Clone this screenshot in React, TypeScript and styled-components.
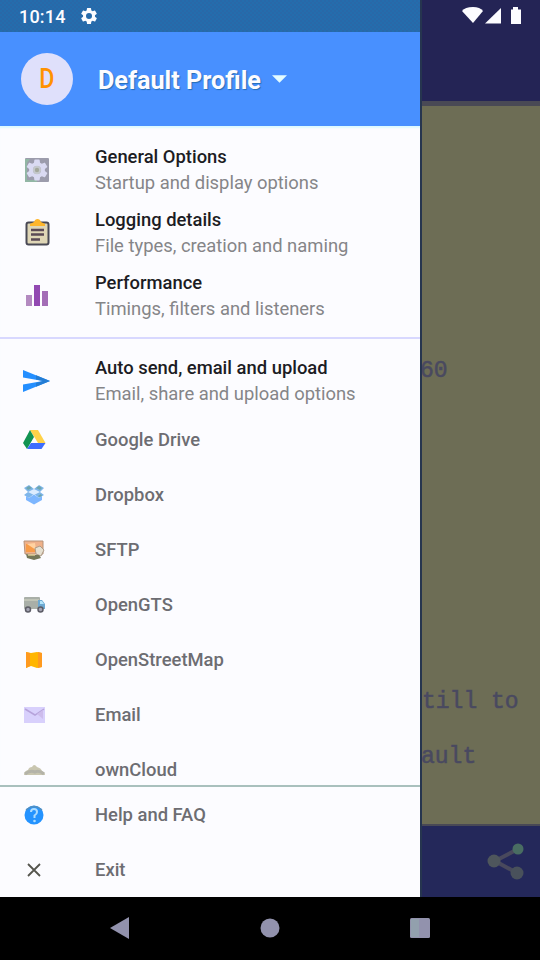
import React from "react";
import styled, { createGlobalStyle } from "styled-components";

const GlobalStyle = createGlobalStyle`
  * { box-sizing: border-box; }
  body { margin: 0; background: #000; font-family: Roboto, sans-serif; }
`;

const Screen = styled.div`
  width: 540px;
  height: 960px;
  display: flex;
  flex-direction: column;
  overflow: hidden;
  background: #000;
`;

const Stage = styled.div`
  height: 897px;
  display: grid;
  grid-template-columns: 420px 120px;
`;

const Drawer = styled.aside`
  height: 897px;
  display: flex;
  flex-direction: column;
  overflow: hidden;
  background: #fcfcff;
`;

const StatusBar = styled.div`
  height: 32px;
  flex: none;
  display: flex;
  align-items: center;
  gap: 13px;
  padding-left: 19px;
  background: repeating-conic-gradient(#246dad 0% 25%, #2968a8 0% 50%) 0 0 / 4px 4px;
  color: #fcfcff;
`;

const Clock = styled.span`
  width: 47px;
  font-size: 18px;
  font-weight: 500;
  letter-spacing: 0.2px;
  white-space: nowrap;
`;

const Header = styled.header`
  height: 94px;
  flex: none;
  display: flex;
  align-items: center;
  padding: 0 0 0 21px;
  background: #4890ff;
`;

const Avatar = styled.div`
  width: 52px;
  height: 52px;
  margin-right: 25px;
  border-radius: 50%;
  display: flex;
  align-items: center;
  justify-content: center;
  background: #dfe0fb;
`;

const Initial = styled.span`
  color: #ff9200;
  font-size: 27px;
  font-weight: 500;
  transform: scaleX(0.86);
`;

const ProfileName = styled.h1`
  margin: 2px 10px 0 0;
  width: 164px;
  color: #fcfcff;
  font-size: 25.2px;
  font-weight: 700;
  white-space: nowrap;
  text-shadow: 1px 1px 1px #246db6;
`;

const List = styled.nav`
  height: 659px;
  flex: none;
  padding-top: 12px;
  overflow: hidden;
  box-shadow: inset 0 3px 2px -1px #dcfaff;
`;

const Footer = styled.nav`
  flex: 1;
  border-top: 2px solid #a9c0bd;
`;

const Divider = styled.hr`
  height: 2px;
  margin: 10px 0 10px;
  border: 0;
  background: #d8d8ff;
`;

const Row = styled.div<{ $tall?: boolean }>`
  height: ${(p) => (p.$tall ? 63 : 55)}px;
  display: grid;
  grid-template-columns: 95px 1fr;
  align-items: center;
`;

const IconSlot = styled.span<{ $large?: boolean }>`
  display: flex;
  justify-content: center;
  width: 28px;
  margin-left: ${(p) => (p.$large ? 23 : 20)}px;
`;

const Lines = styled.div`
  display: flex;
  flex-direction: column;
  line-height: 26px;
  font-size: 18.4px;
  white-space: nowrap;
`;

const Title = styled.span`
  color: #1c1c24;
  font-weight: 500;
`;

const Subtitle = styled.span`
  color: #858588;
  font-weight: 400;
`;

const Label = styled.span`
  color: #6d6d72;
  font-size: 18.4px;
  font-weight: 500;
  white-space: nowrap;
`;

const LogPane = styled.main`
  height: 897px;
  display: flex;
  flex-direction: column;
  overflow: hidden;
  background: #242455;
  border-left: 2px solid #26354f;
`;

const TopBar = styled.div`
  height: 101px;
  flex: none;
  display: flex;
  align-items: flex-start;
  justify-content: flex-end;
  padding: 6px 16px 0 0;
`;

const Paper = styled.div`
  height: 725px;
  flex: none;
  display: flex;
  flex-direction: column;
  border-top: 5px solid #494955;
  border-bottom: 2px solid #494955;
  background: #6d6d55;
  color: #494960;
  font-family: "Liberation Mono", monospace;
  font-size: 23px;
  line-height: 30px;
  white-space: pre;
  -webkit-text-stroke: 0.5px #494960;
`;

const LogLine = styled.div<{ $gap: number; $shift?: number }>`
  margin-top: ${(p) => p.$gap}px;
  margin-left: ${(p) => p.$shift ?? 0}px;
`;

const BottomBar = styled.div`
  flex: 1;
  display: flex;
  align-items: center;
  justify-content: flex-end;
  padding: 0 16px 2px 0;
  background: #24285a;
`;

const NavBar = styled.footer`
  height: 63px;
  display: grid;
  grid-template-columns: 150px 150px 150px;
  justify-content: center;
  align-items: center;
  justify-items: center;
  padding: 0 1px 1px 0;
  background: #000;
`;

const gearPath =
  "M19.14 12.94c.04-.3.06-.61.06-.94 0-.32-.02-.64-.07-.94l2.03-1.58a.49.49 0 0 0 .12-.61l-1.92-3.32a.49.49 0 0 0-.59-.22l-2.39.96a7 7 0 0 0-1.62-.94l-.36-2.54A.48.48 0 0 0 13.92 2.4h-3.84a.48.48 0 0 0-.47.41l-.36 2.54c-.59.24-1.13.57-1.62.94l-2.39-.96a.49.49 0 0 0-.59.22L2.74 8.87a.48.48 0 0 0 .12.61l2.03 1.58a7 7 0 0 0 0 1.88l-2.03 1.58a.49.49 0 0 0-.12.61l1.92 3.32c.12.22.37.29.59.22l2.39-.96c.5.38 1.03.7 1.62.94l.36 2.54c.05.24.24.41.48.41h3.84c.24 0 .44-.17.47-.41l.36-2.54a7 7 0 0 0 1.62-.94l2.39.96c.22.08.47 0 .59-.22l1.92-3.32a.48.48 0 0 0-.12-.61zM12 15.6a3.6 3.6 0 1 1 0-7.2 3.6 3.6 0 0 1 0 7.2z";

const StatusGear = () => (
  <svg width="20" height="20" viewBox="0 0 24 24"><path fill="#fcfcff" d={gearPath} /></svg>
);

const SignalIcons = () => (
  <svg width="62" height="20" viewBox="0 0 62 20" fill="#fcfcff">
    <path d="M0 5Q3 1 11 1Q18 1 21 5L11 17Z" />
    <path d="M23 17.500L39 2V17.500Z" />
    <path d="M49 3.500H51V1H56V3.500H59V18H49Z" />
  </svg>
);

const GeneralIcon = () => (
  <svg width="24" height="24" viewBox="0 0 24 24">
    <rect width="24" height="24" rx="1" fill="#9c9cac" />
    <path d="M0 1H5L2 5V22H12V24H0Z" fill="#92b6a5" />
    <path fill="#dadaf2" transform="translate(-1.200 -1.200) scale(1.1)" d={gearPath} />
    <circle cx="12" cy="12" r="4.200" fill="#c4c8cc" />
    <circle cx="12" cy="12" r="2.200" fill="#a4a89c" />
  </svg>
);

const ClipboardIcon = () => (
  <svg width="25" height="27" viewBox="0 0 25 27">
    <rect x="1.500" y="3.500" width="22" height="22" rx="2" fill="#dfd6b6" stroke="#494955" strokeWidth="2" />
    <path d="M5 7V5L9 3Q10 0 12.500 0Q15 0 16 3L20 5V7Z" fill="#ffb62b" />
    <path d="M6 11H19M6 15.500H19M6 20.500H15" stroke="#5b4955" strokeWidth="2.300" />
  </svg>
);

const ChartIcon = () => (
  <svg width="22" height="23" viewBox="0 0 22 23">
    <rect x="0" y="11" width="6" height="11" fill="#b38ac0" />
    <rect x="8" y="1" width="6" height="21" fill="#9249b2" />
    <rect x="16" y="7" width="6" height="15" fill="#a36db6" />
  </svg>
);

const SendIcon = () => (
  <svg width="28" height="24" viewBox="0 0 28 24">
    <path d="M0 1L27 12L0 23V15.500L20 12L0 8.500Z" fill="#248fff" />
    <path d="M13 6.300L27 12L13 17.700V14L20 12L13 10.500Z" fill="#247dd4" />
  </svg>
);

const DriveIcon = () => (
  <svg width="23" height="20" viewBox="0 0 23 20">
    <path d="M7 0H15L22.500 13H15Z" fill="#ffd249" />
    <path d="M7 0L11 7L4 19L0 13Z" fill="#129352" />
    <path d="M8 13H22.500L18.500 19H4Z" fill="#3d6dff" />
  </svg>
);

const DropboxIcon = () => (
  <svg width="22" height="20" viewBox="0 0 22 20">
    <path d="M1 3L6 0L11 4L16 0L21 3L17 7L21 10L16 13L11 9L6 13L1 10L5 7Z" fill="#7fb6ea" />
    <path d="M5 7L11 4L17 7L11 10Z" fill="#dcecff" />
    <path d="M3 11L6 13L11 9.500L16 13L19 11V15L11 19.500L3 15Z" fill="#7db6ff" />
    <path d="M3 3L6 1L9 3L5 5ZM13 3L16 1L19 3L17 5ZM15 11L18 9L19 11L16 12Z" fill="#6da5ad" />
  </svg>
);

const SftpIcon = () => (
  <svg width="22" height="20" viewBox="0 0 22 20">
    <path d="M1 1H20V14H2Z" fill="#efb18a" stroke="#b69279" />
    <rect x="3" y="4" width="9" height="8" fill="#f79b48" />
    <path d="M4 4L13 10L12 3Z" fill="#ffd2a0" />
    <path d="M12 8L17 6L21 10L18 16L13 14Z" fill="#e5dfd0" stroke="#ad9b88" />
    <path d="M3 14L8 15H16L18 18L11 20L4 18Z" fill="#747758" />
    <path d="M5 15H12" stroke="#dbc98f" strokeWidth="1.500" />
  </svg>
);

const TruckIcon = () => (
  <svg width="23" height="16" viewBox="0 0 23 16">
    <rect x="1" y="0" width="16" height="12" rx="1" fill="#a9afa8" />
    <path d="M1 3H16" stroke="#c9cbbd" strokeWidth="1.500" />
    <path d="M15 3H19L22 7V12H15Z" fill="#6da9d2" />
    <path d="M17 4H19L21 7H17Z" fill="#b5e6fb" />
    <circle cx="5" cy="12.500" r="2.500" fill="#a5a5b4" stroke="#5c5c66" strokeWidth="1.500" />
    <circle cx="17.500" cy="12.500" r="2.500" fill="#a5a5b4" stroke="#5c5c66" strokeWidth="1.500" />
  </svg>
);

const MapIcon = () => (
  <svg width="18" height="18" viewBox="0 0 18 18">
    <path d="M1 1L6 2L12 1L17 2V16L12 17L6 15L1 17Z" fill="#ffb600" />
    <path d="M1 1L5 2V15L1 17ZM13 1L17 2V16L13 17Z" fill="#ff9a1f" />
  </svg>
);

const MailIcon = () => (
  <svg width="21" height="16" viewBox="0 0 21 16">
    <rect width="21" height="16" fill="#d8d0fc" />
    <path d="M1 2L11 8L20 2" fill="none" stroke="#b6a3db" strokeWidth="1.500" />
    <path d="M13 7L19 3V12Z" fill="#cdbcec" />
  </svg>
);

const CloudIcon = () => (
  <svg width="21" height="12" viewBox="0 0 21 12">
    <path d="M0 11Q0 7 4 6Q5 3 8 3Q10-1 13 3Q17 4 18 7Q21 8 21 11Z" fill="#c9c6b0" />
    <path d="M1 10Q6 6 11 8Q15 6 20 10" stroke="#b4b3a8" strokeWidth="3" fill="none" />
  </svg>
);

const HelpIcon = () => (
  <svg width="20" height="20" viewBox="0 0 20 20">
    <circle cx="10" cy="10" r="9.500" fill="#2493ff" />
    <path d="M2 5Q10-2 18 5" fill="none" stroke="#578fba" strokeWidth="1.500" />
    <path d="M7 7Q7 4 10 4Q13 4 13 7Q13 9 10.500 10.500V13" fill="none" stroke="#acdcff" strokeWidth="2" />
    <circle cx="10.500" cy="16" r="1.300" fill="#acdcff" />
  </svg>
);

const CloseIcon = () => (
  <svg width="14" height="14" viewBox="0 0 14 14"><path d="M1 1L13 13M13 1L1 13" stroke="#55554d" strokeWidth="1.800" /></svg>
);

const ShareIcon = () => (
  <svg width="38" height="40" viewBox="0 0 38 40">
    <path d="M32 8L9 20L31 32" fill="none" stroke="#49495d" strokeWidth="4" />
    <circle cx="8" cy="20" r="6.500" fill="#4e565c" />
    <circle cx="32" cy="8" r="5.500" fill="#496d62" />
    <circle cx="31" cy="32" r="6.500" fill="#49515b" />
  </svg>
);

const sections = [
  { title: "General Options", sub: "Startup and display options", icon: <GeneralIcon /> },
  { title: "Logging details", sub: "File types, creation and naming", icon: <ClipboardIcon /> },
  { title: "Performance", sub: "Timings, filters and listeners", icon: <ChartIcon /> },
];

const targets = [
  { label: "Google Drive", icon: <DriveIcon /> },
  { label: "Dropbox", icon: <DropboxIcon /> },
  { label: "SFTP", icon: <SftpIcon /> },
  { label: "OpenGTS", icon: <TruckIcon /> },
  { label: "OpenStreetMap", icon: <MapIcon /> },
  { label: "Email", icon: <MailIcon /> },
  { label: "ownCloud", icon: <CloudIcon /> },
];

function Section({ title, sub, icon }: { title: string; sub: string; icon: React.ReactNode }) {
  return (
    <Row $tall>
      <IconSlot $large>{icon}</IconSlot>
      <Lines>
        <Title>{title}</Title>
        <Subtitle>{sub}</Subtitle>
      </Lines>
    </Row>
  );
}

function Item({ label, icon }: { label: string; icon: React.ReactNode }) {
  return (
    <Row>
      <IconSlot>{icon}</IconSlot>
      <Label>{label}</Label>
    </Row>
  );
}

export default function App() {
  return (
    <>
      <GlobalStyle />
      <Screen>
        <Stage>
          <Drawer>
            <StatusBar>
              <Clock>10:14</Clock>
              <StatusGear />
            </StatusBar>
            <Header>
              <Avatar><Initial>D</Initial></Avatar>
              <ProfileName>Default Profile</ProfileName>
              <svg width="15" height="9" viewBox="0 0 16 9"><path d="M0 0H16L8 8Z" fill="#e4fcff" /></svg>
            </Header>
            <List>
              {sections.map((s) => <Section key={s.title} {...s} />)}
              <Divider />
              <Section title="Auto send, email and upload" sub="Email, share and upload options" icon={<SendIcon />} />
              {targets.map((t) => <Item key={t.label} {...t} />)}
            </List>
            <Footer>
              <Item label="Help and FAQ" icon={<HelpIcon />} />
              <Item label="Exit" icon={<CloseIcon />} />
            </Footer>
          </Drawer>
          <LogPane>
            <TopBar><SignalIcons /></TopBar>
            <Paper>
              <LogLine $gap={250} $shift={-2}>60</LogLine>
              <LogLine $gap={301}>till to</LogLine>
              <LogLine $gap={25} $shift={-1}>ault</LogLine>
            </Paper>
            <BottomBar><ShareIcon /></BottomBar>
          </LogPane>
        </Stage>
        <NavBar>
          <svg width="20" height="24" viewBox="0 0 20 24"><path d="M0 12L19 1V23Z" fill="#9292ad" /></svg>
          <svg width="20" height="20" viewBox="0 0 20 20"><circle cx="10" cy="10" r="9.500" fill="#9292ad" /></svg>
          <svg width="20" height="20" viewBox="0 0 20 20"><rect width="20" height="20" rx="1.500" fill="#9292ad" /><rect x="1" y="1" width="8" height="18" fill="#92a0ad" /></svg>
        </NavBar>
      </Screen>
    </>
  );
}
